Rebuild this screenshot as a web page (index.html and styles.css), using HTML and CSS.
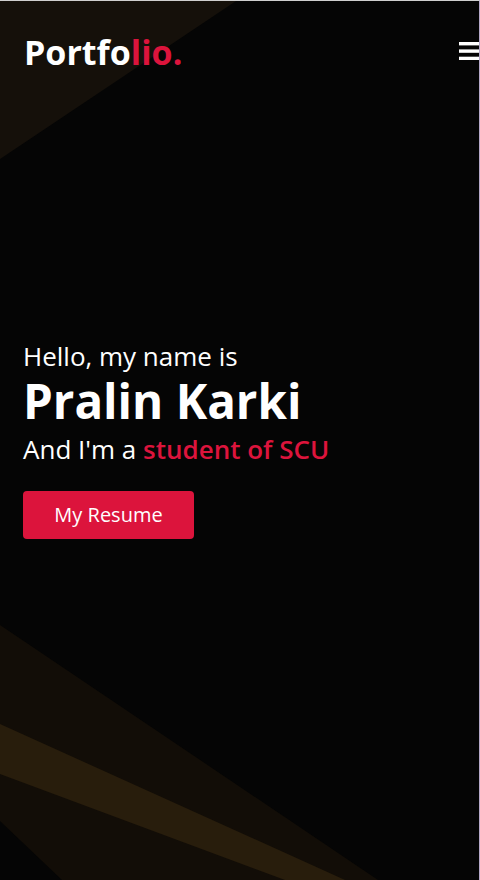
FILE: index.html
```html
<!DOCTYPE html>
<html lang="en">
<head>
<meta charset="utf-8">
<title>Portfolio</title>
<link rel="stylesheet" href="styles.css">
</head>
<body>
<section class="hero">
  <svg class="hero-bg" viewBox="0 0 479 879" preserveAspectRatio="none" aria-hidden="true">
    <polygon points="0,0 236,0 0,158" fill="#15100a"/>
    <polygon points="0,624 378,879 62,879 0,820" fill="#120d07"/>
    <polygon points="0,723 345,879 285,879 0,773" fill="#281d0c"/>
  </svg>
  <header class="nav">
    <a class="logo" href="#">Portfo<span class="accent">lio.</span></a>
    <button class="menu" aria-label="Menu">
      <svg width="20" height="18" viewBox="0 0 20 18"><rect x="0" y="0" width="20" height="3.4" fill="#fff"/><rect x="0" y="7.4" width="20" height="3.4" fill="#fff"/><rect x="0" y="14.7" width="20" height="3.3" fill="#fff"/></svg>
    </button>
  </header>
  <div class="intro">
    <p class="hello">Hello, my name is</p>
    <h1 class="name">Pralin Karki</h1>
    <p class="role">And I'm a <span class="accent strong">student of SCU</span></p>
    <a class="btn" href="#">My Resume</a>
  </div>
</section>
</body>
</html>
```
FILE: styles.css
```css
* { box-sizing: border-box; }
html, body { margin: 0; padding: 0; }
body {
  background: #050505;
  font-family: "Open Sans", "Noto Sans", sans-serif;
  color: #fff;
}
.hero {
  position: relative;
  height: 880px;
  border-top: 1px solid #cfcfcf;
  border-right: 1px solid #b6a8c8;
  display: flex;
  align-items: center;
  padding: 0 23px;
  overflow: hidden;
}
.hero-bg {
  position: absolute;
  inset: 0;
  width: 100%;
  height: 100%;
  z-index: 0;
}
.nav {
  position: absolute;
  top: 0;
  left: 0;
  right: 0;
  display: flex;
  justify-content: space-between;
  align-items: flex-start;
  padding: 27px 0 0 24px;
  z-index: 2;
}
.logo {
  font-size: 34px;
  font-weight: 700;
  color: #fff;
  text-decoration: none;
  line-height: 48px;
}
.accent { color: #dc143c; }
.strong { font-weight: 600; }
.menu {
  background: none;
  border: 0;
  padding: 0;
  margin: 14px 0 0 0;
  display: flex;
  cursor: pointer;
}
.intro {
  position: relative;
  z-index: 1;
  margin-top: -3px;
  display: flex;
  flex-direction: column;
  align-items: flex-start;
}
.hello {
  margin: 0;
  font-size: 26px;
  line-height: 34px;
}
.name {
  margin: 0;
  font-size: 47.5px;
  font-weight: 700;
  line-height: 56px;
}
.role {
  margin: 3px 0 0 0;
  font-size: 26px;
  line-height: 34px;
}
.btn {
  display: block;
  margin-top: 25px;
  width: 171px;
  height: 48px;
  line-height: 48px;
  text-align: center;
  background: #dc143c;
  color: #fff;
  font-size: 20px;
  border-radius: 4px;
  text-decoration: none;
}
```
